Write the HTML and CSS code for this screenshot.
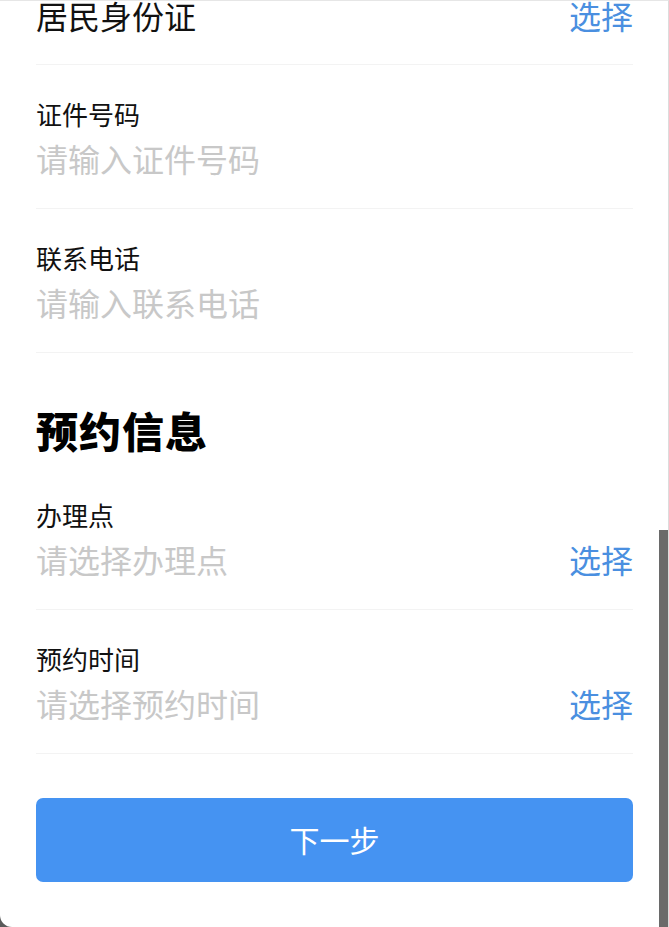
FILE: index.html
```html
<!DOCTYPE html>
<html lang="zh-CN">
<head>
<meta charset="utf-8">
<title>预约信息</title>
<link rel="stylesheet" href="styles.css">
</head>
<body>
<div class="frame">
  <div class="sheet">
    <div class="content">
      <div class="row row-first">
        <div class="value"><span class="filled">居民身份证</span><span class="pick">选择</span></div>
      </div>
      <div class="row">
        <div class="label">证件号码</div>
        <div class="value"><span class="placeholder">请输入证件号码</span></div>
      </div>
      <div class="row">
        <div class="label">联系电话</div>
        <div class="value"><span class="placeholder">请输入联系电话</span></div>
      </div>
      <h2 class="section-title">预约信息</h2>
      <div class="row">
        <div class="label">办理点</div>
        <div class="value"><span class="placeholder">请选择办理点</span><span class="pick">选择</span></div>
      </div>
      <div class="row">
        <div class="label">预约时间</div>
        <div class="value"><span class="placeholder">请选择预约时间</span><span class="pick">选择</span></div>
      </div>
      <button class="next-btn" type="button">下一步</button>
    </div>
  </div>
  <div class="scroll-thumb"></div>
</div>
</body>
</html>
```

FILE: styles.css
```css
html, body {
  margin: 0;
  padding: 0;
}

body {
  font-family: "Noto Sans CJK SC", "Noto Sans", sans-serif;
  background: #5a5a5a;
}

.frame {
  position: relative;
  width: 669px;
  height: 927px;
  overflow: hidden;
  background: #5a5a5a;
}

.sheet {
  height: 927px;
  background: #ffffff;
  border-top: 1px solid #e6e6e6;
  border-right: 1px solid #dcdcdc;
  box-sizing: border-box;
  border-bottom-left-radius: 12px;
  overflow: hidden;
}

.content {
  padding: 0 35px 0 36px;
}

.row {
  padding-top: 31px;
  padding-bottom: 28px;
  border-bottom: 1px solid #f3f3f3;
}

.row-first {
  margin-top: -8px;
  padding-top: 0;
  padding-bottom: 27px;
}

.label {
  font-size: 26px;
  line-height: 36px;
  color: #111111;
}

.value {
  margin-top: 4px;
  display: flex;
  justify-content: space-between;
  align-items: center;
  font-size: 32px;
  line-height: 44px;
}

.row-first .value {
  margin-top: 0;
}

.filled {
  color: #111111;
}

.placeholder {
  color: #c8c8c8;
}

.pick {
  color: #4a8fe0;
}

.section-title {
  margin: 0;
  padding-top: 52px;
  padding-bottom: 11px;
  font-size: 42px;
  line-height: 50px;
  font-weight: 900;
  letter-spacing: 1px;
  color: #000000;
}

.next-btn {
  display: block;
  width: 100%;
  height: 84px;
  margin-top: 44px;
  border: none;
  border-radius: 7px;
  background: #4593f2;
  color: #ffffff;
  font-family: inherit;
  font-size: 30px;
  line-height: 40px;
  padding: 0 0 3px 0;
}

.scroll-thumb {
  position: absolute;
  right: 1px;
  top: 530px;
  bottom: 0;
  width: 9px;
  background: #6a6a6a;
}
```
